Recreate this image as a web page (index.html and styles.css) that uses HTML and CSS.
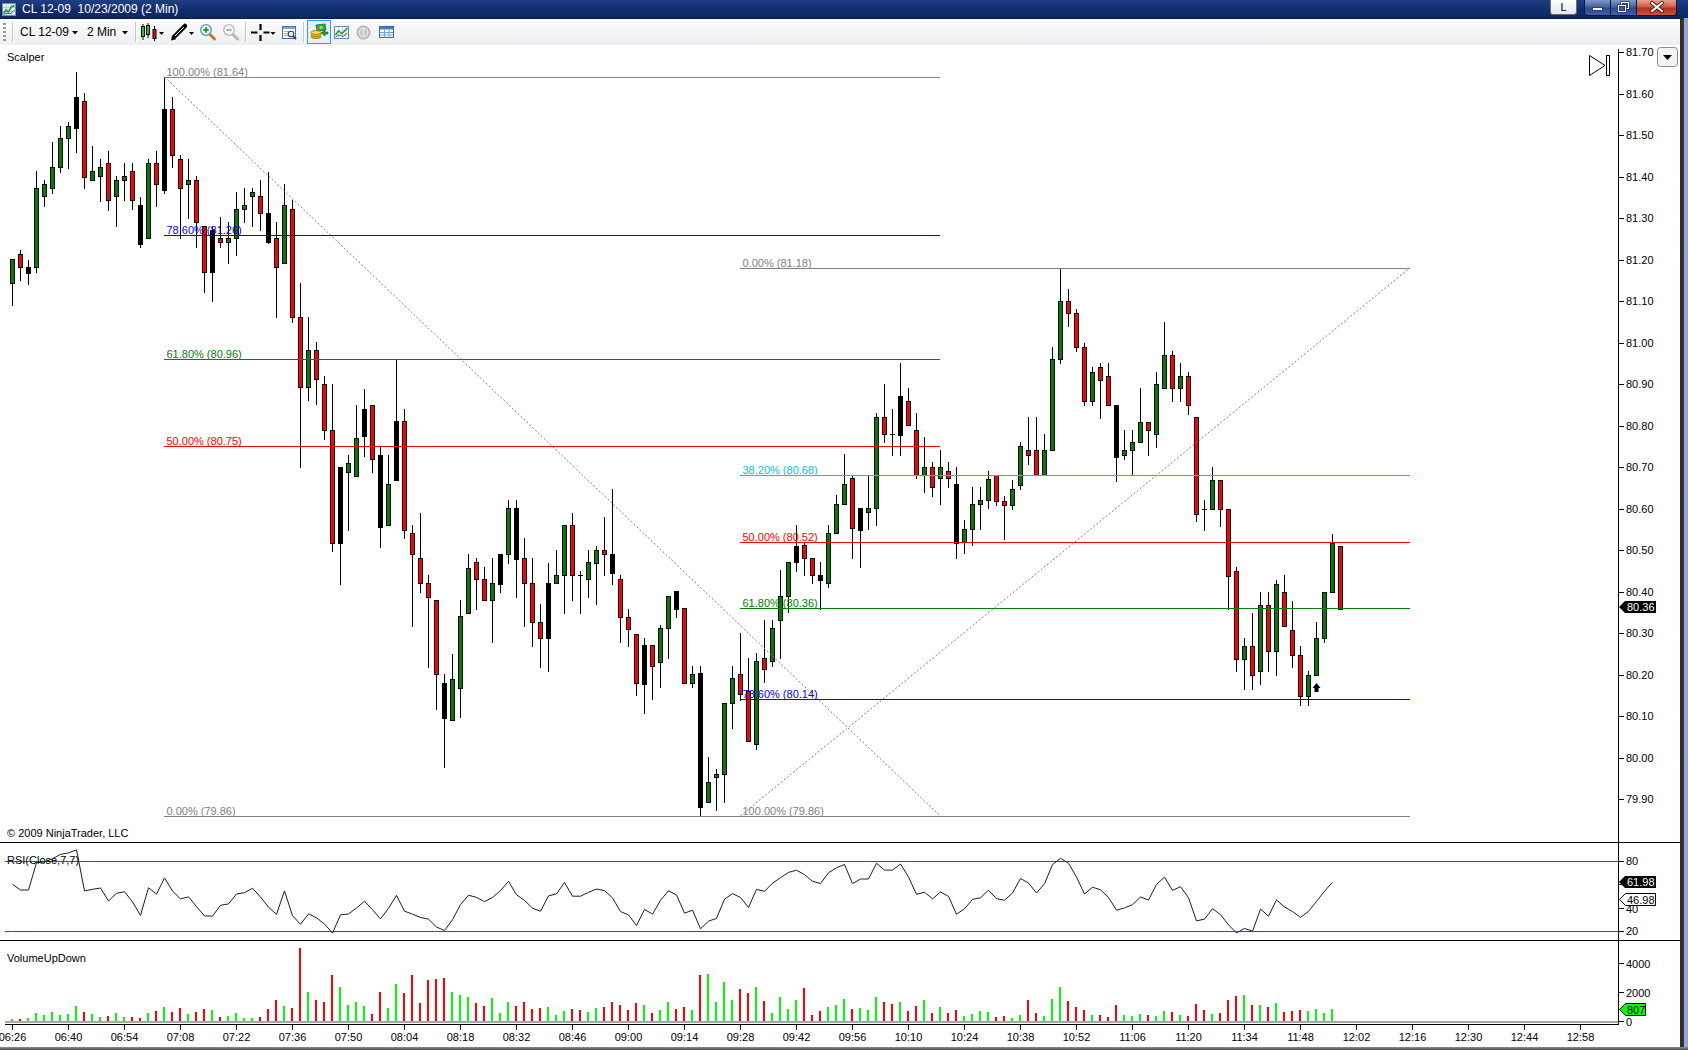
FILE: index.html
```html
<!DOCTYPE html>
<html lang="en">
<head>
<meta charset="utf-8">
<title>CL 12-09 10/23/2009 (2 Min)</title>
<link rel="stylesheet" href="styles.css">
</head>
<body>
<div class="window">
  <div class="titlebar">
    <svg class="app-icon" width="14" height="13" viewBox="0 0 14 13">
      <rect x="0.5" y="0.5" width="13" height="12" fill="#eef3f8" stroke="#6f8fb8"/>
      <path d="M1 4.5h12M1 8.5h12M4.5 1v11M9.5 1v11" stroke="#b9c9dc" stroke-width="1"/>
      <polyline points="1.5,10.5 4,7 6.5,9 9,4 12.5,2.5" fill="none" stroke="#1f9f2a" stroke-width="1.6"/>
      <polyline points="1.5,11.5 5,10 8,11 12.5,7" fill="none" stroke="#2a5fd0" stroke-width="1"/>
    </svg>
    <span class="title">CL 12-09  10/23/2009 (2 Min)</span>
    <div class="spacer"></div>
    <div class="btn-l">L</div>
    <div class="caps">
      <div class="cap cap-min">
        <svg width="25" height="15" viewBox="0 0 25 15"><rect x="7.5" y="7.5" width="10" height="3" fill="#fff" stroke="#1b2a50" stroke-width="0.8"/></svg>
      </div>
      <div class="cap cap-max">
        <svg width="25" height="15" viewBox="0 0 25 15">
          <rect x="10.5" y="2.5" width="7" height="6" fill="none" stroke="#1b2a50" stroke-width="2.2"/>
          <rect x="10.5" y="2.5" width="7" height="6" fill="none" stroke="#fff" stroke-width="1"/>
          <rect x="7.5" y="5.5" width="7" height="6" fill="#3a5a9c" stroke="#1b2a50" stroke-width="2.2"/>
          <rect x="7.5" y="5.5" width="7" height="6" fill="none" stroke="#fff" stroke-width="1"/>
        </svg>
      </div>
      <div class="cap cap-close">
        <svg width="40" height="15" viewBox="0 0 40 15">
          <path d="M15 3l10 8M25 3l-10 8" stroke="#3a0c06" stroke-width="3.6" stroke-linecap="square"/>
          <path d="M15 3l10 8M25 3l-10 8" stroke="#fff" stroke-width="2" stroke-linecap="square"/>
        </svg>
      </div>
    </div>
  </div>
  <div class="frame">
    <div class="content">
      <div class="toolbar">
        <div class="grip ml3"></div>
        <div class="tsep ml6"></div>
        <div class="combo ml6"><span>CL 12-09</span><svg class="caret" width="6" height="4" viewBox="0 0 6 4"><path d="M0 0h6L3 3.5z"/></svg></div>
        <div class="combo ml9"><span>2 Min</span><svg class="caret wide" width="6" height="4" viewBox="0 0 6 4"><path d="M0 0h6L3 3.5z"/></svg></div>
        <div class="tsep ml7"></div>
        <div class="tb w27 ml2">
          <svg width="27" height="20" viewBox="0 0 27 20">
            <path d="M4 2v16M9 1v15M15.5 4v15" stroke="#000" stroke-width="1"/>
            <rect x="2.5" y="4.5" width="3" height="10" fill="#12d012" stroke="#000"/>
            <rect x="7.5" y="3.5" width="3" height="9" fill="#12d012" stroke="#000"/>
            <rect x="14" y="7.5" width="3" height="9" fill="#f01010" stroke="#000"/>
            <path d="M20 10h5l-2.5 3z" fill="#000"/>
          </svg>
        </div>
        <div class="tb w26 ml3">
          <svg width="26" height="20" viewBox="0 0 26 20">
            <path d="M2 18.5l1.2-5 3.8 3.8z" fill="#000"/>
            <path d="M5 15l11-11" stroke="#000" stroke-width="4.5" stroke-linecap="round"/>
            <path d="M6 14l9-9" stroke="#fff" stroke-width="1"/>
            <path d="M20 10h5l-2.5 3z" fill="#000"/>
          </svg>
        </div>
        <div class="tb w18 ml4">
          <svg width="18" height="20" viewBox="0 0 18 20">
            <path d="M11 12.5l4.5 4.5" stroke="#c27a2a" stroke-width="3" stroke-linecap="round"/>
            <circle cx="7" cy="8" r="5.3" fill="#eef6ff" stroke="#5b8fc7" stroke-width="1.3"/>
            <path d="M4.3 8h5.4M7 5.3v5.4" stroke="#27a127" stroke-width="2"/>
          </svg>
        </div>
        <div class="tb w18 ml5">
          <svg width="18" height="20" viewBox="0 0 18 20">
            <path d="M11 12.5l4.5 4.5" stroke="#b5b5b5" stroke-width="3" stroke-linecap="round"/>
            <circle cx="7" cy="8" r="5.3" fill="#f6f6f6" stroke="#b8b8b8" stroke-width="1.3"/>
            <path d="M4.3 8h5.4" stroke="#b0b0b0" stroke-width="2"/>
          </svg>
        </div>
        <div class="tsep ml5"></div>
        <div class="tb w27 ml2">
          <svg width="27" height="20" viewBox="0 0 27 20">
            <path d="M2 10.5h6.5M14.5 10.5h6M11.5 2v6M11.5 13v6" stroke="#000" stroke-width="2.2"/>
            <path d="M21.5 10h5l-2.5 3z" fill="#000"/>
          </svg>
        </div>
        <div class="tb w18 ml5">
          <svg width="18" height="20" viewBox="0 0 18 20">
            <rect x="1.5" y="4.5" width="13" height="12" fill="#fff" stroke="#4a6fa5"/>
            <rect x="2" y="5" width="12" height="2" fill="#79a6de"/>
            <path d="M3 9.5h6M3 11.5h4M3 13.5h5" stroke="#9ab3d3"/>
            <circle cx="10" cy="12" r="2.8" fill="#e8f2ff" stroke="#2f3f5f" stroke-width="1.1"/>
            <path d="M12 14l3 3" stroke="#2f3f5f" stroke-width="1.8"/>
          </svg>
        </div>
        <div class="tsep ml4"></div>
        <div class="tb-sel ml2">
          <svg width="22" height="22" viewBox="0 0 22 22">
            <path d="M8 4l9-1 1 6-9 1z" fill="#3aa83a" stroke="#1f6f1f" stroke-width="0.8"/>
            <circle cx="13" cy="6.5" r="1.6" fill="#9be09b"/>
            <ellipse cx="8" cy="15.5" rx="5" ry="2" fill="#e6b21c" stroke="#9a6d00" stroke-width="0.8"/>
            <ellipse cx="8" cy="13.5" rx="5" ry="2" fill="#f2c630" stroke="#9a6d00" stroke-width="0.8"/>
            <ellipse cx="8" cy="11.5" rx="5" ry="2" fill="#ffd94a" stroke="#9a6d00" stroke-width="0.8"/>
            <path d="M13 12l4-3v2h3v2h-3v2z" fill="#2f9a2f" stroke="#1a5e1a" stroke-width="0.6"/>
          </svg>
        </div>
        <div class="tb w18 ml2">
          <svg width="18" height="20" viewBox="0 0 18 20">
            <rect x="1.5" y="4.5" width="14" height="12" fill="#fff" stroke="#6f88a8"/>
            <path d="M2 8.5h13M2 12.5h13M5.5 5v11M9.5 5v11M12.5 5v11" stroke="#cfd9e6"/>
            <polyline points="2.5,13 5.5,9 9,11.5 14.5,6" fill="none" stroke="#1d9a24" stroke-width="1.5"/>
            <polyline points="2.5,15 6,13 10,14.5 14.5,11" fill="none" stroke="#2a5fd0" stroke-width="1"/>
          </svg>
        </div>
        <div class="tb w18 ml4">
          <svg width="18" height="20" viewBox="0 0 18 20">
            <circle cx="8.5" cy="10.5" r="6.5" fill="#c9c9c9" stroke="#a9a9a9"/>
            <circle cx="8.5" cy="10.5" r="4.3" fill="none" stroke="#e4e4e4" stroke-width="1.2"/>
            <path d="M8.5 7v7" stroke="#e8e8e8" stroke-width="1.2"/>
          </svg>
        </div>
        <div class="tb w18 ml5">
          <svg width="18" height="20" viewBox="0 0 18 20">
            <rect x="1.5" y="4.5" width="14" height="11" fill="#fff" stroke="#3a66a8"/>
            <rect x="2" y="5" width="13" height="2.5" fill="#4b7cc2"/>
            <path d="M2 10.5h13M2 13h13M6.5 7.5v8M11 7.5v8" stroke="#7f9ccc"/>
          </svg>
        </div>
      </div>
      <svg id="chart" class="chart" width="1680" height="1002" viewBox="0 45 1680 1002"></svg>
    </div>
    <div class="frame-right"></div>
  </div>
  <div class="frame-bottom"></div>
</div>
<script src="script.js"></script>
</body>
</html>
```

FILE: styles.css
```css
html, body {
  margin: 0;
  padding: 0;
}
body {
  width: 1688px;
  height: 1050px;
  overflow: hidden;
  background: #2c2825;
  font-family: "Liberation Sans", Arial, sans-serif;
}
.window {
  display: flex;
  flex-direction: column;
  width: 1688px;
  height: 1050px;
}
.titlebar {
  height: 18px;
  flex: none;
  display: flex;
  align-items: flex-start;
  background: linear-gradient(#223f84, #102b6b 60%, #0d2764);
  color: #fff;
}
.app-icon {
  margin: 3px 0 0 2px;
  flex: none;
}
.title {
  margin-left: 6px;
  font-size: 12px;
  line-height: 18px;
  white-space: pre;
}
.spacer {
  flex: 1;
}
.btn-l {
  width: 27px;
  height: 15px;
  box-sizing: border-box;
  margin-right: 7px;
  border: 1px solid #6a6f7a;
  border-top: none;
  border-radius: 0 0 3px 3px;
  background: linear-gradient(#ffffff, #e4e6ea);
  color: #000;
  font-size: 11px;
  line-height: 14px;
  text-align: center;
}
.caps {
  display: flex;
  width: 93px;
  height: 16px;
  box-sizing: border-box;
  margin-right: 11px;
  border: 1px solid #0b1836;
  border-top: none;
  border-radius: 0 0 4px 4px;
  overflow: hidden;
}
.cap {
  height: 15px;
}
.cap svg {
  display: block;
}
.cap-min, .cap-max {
  width: 25px;
  background: linear-gradient(#7f97c8, #46649f 45%, #2c4b8c 55%, #3d62a8);
}
.cap-max {
  border-left: 1px solid #0b1836;
}
.cap-close {
  flex: 1;
  border-left: 1px solid #0b1836;
  background: linear-gradient(#e6a291, #cf5a43 45%, #b5301d 55%, #c9543c);
}
.frame {
  flex: 1;
  display: flex;
  min-height: 0;
}
.content {
  width: 1680px;
  display: flex;
  flex-direction: column;
  background: #fff;
}
.toolbar {
  height: 27px;
  flex: none;
  box-sizing: border-box;
  border-top: 1px solid #0a1c48;
  display: flex;
  align-items: center;
  background: linear-gradient(#fbfbfc, #f3f4f6 60%, #eceef1);
  font-size: 12px;
  color: #000;
}
.ml2 { margin-left: 2px; }
.ml3 { margin-left: 3px; }
.ml4 { margin-left: 4px; }
.ml5 { margin-left: 5px; }
.ml6 { margin-left: 6px; }
.ml7 { margin-left: 7px; }
.ml9 { margin-left: 9px; }
.grip {
  width: 3px;
  height: 18px;
  background: repeating-linear-gradient(#9a9a9a 0, #9a9a9a 2px, transparent 2px, transparent 4px);
}
.tsep {
  width: 1px;
  height: 20px;
  background: #c4c6ca;
  border-right: 1px solid #ffffff;
}
.combo {
  display: flex;
  align-items: center;
  height: 20px;
}
.caret {
  margin-left: 3px;
  margin-top: 1px;
}
.caret.wide {
  margin-left: 6px;
}
.tb {
  height: 20px;
}
.tb svg, .tb-sel svg, .combo svg {
  display: block;
}
.w18 { width: 18px; }
.w26 { width: 26px; }
.w27 { width: 27px; }
.tb-sel {
  width: 24px;
  height: 24px;
  box-sizing: border-box;
  border: 1px solid #3399ff;
  background: #e3f1fc;
}
.chart {
  display: block;
  flex: none;
}
.chart text {
  font-family: "Liberation Sans", Arial, sans-serif;
  font-size: 11px;
}
.frame-right {
  width: 8px;
  flex: none;
  background: linear-gradient(to right, #2f2a27 0, #3a332e 4px, #93abdc 4px, #8aa3d6 8px);
}
.frame-bottom {
  height: 3px;
  flex: none;
  background: linear-gradient(#8e8e8e, #4a4a4a);
}
```

FILE: script.js
```js
(function () {
  var NS = 'http://www.w3.org/2000/svg';
  var svg = document.getElementById('chart');

  function el(tag, attrs, parent) {
    var e = document.createElementNS(NS, tag);
    for (var k in attrs) e.setAttribute(k, attrs[k]);
    (parent || svg).appendChild(e);
    return e;
  }
  function label(x, y, s, fill, anchor) {
    var t = el('text', { x: x, y: y });
    if (fill) t.setAttribute('fill', fill);
    if (anchor) t.setAttribute('text-anchor', anchor);
    t.textContent = s;
    return t;
  }
  function hline(x1, x2, y, color) {
    var yy = Math.round(y) + 0.5;
    return el('line', { x1: x1, x2: x2, y1: yy, y2: yy, stroke: color, 'stroke-width': 1 });
  }
  function vline(x, y1, y2, color) {
    var xx = Math.round(x) + 0.5;
    return el('line', { x1: xx, x2: xx, y1: y1, y2: y2, stroke: color, 'stroke-width': 1 });
  }
  function PY(p) { return 52 + (81.70 - p) * 415; }
  function CX(n) { return 12 + 8 * n; }

  /* OHLC bars, recorded as pixel rows: type, bodyTop, bodyBottom, wickTop, wickBottom */
  var segs = [
    { a: 60, s: 3, d: 'g 598 670 598 735|r 583 622 570 660|k+ 622 640 600 672|g 385 622 333 635|g 373 409 360 437|g 322 385 246 398|g 235 322 198 335|g 198 235 186 323|k+ 112 203 37 277|r 124 350 100 385|g 334 361 258 361|g 322 349 297 422|r 310 421 272 449|g 361 409 348 497|g 349 361 310 421|r 334 421 310 448|k- 435 552 410 562|g 310 535 297 535|r 310 373 272 437|k+ 148 390 50 400|r 148 286 112 322|r 297 385 286 535|g 361 373 297 473|r 361 485 348 560|r 497 635 497 697|k- 510 637 497 722|r 535 547 472 560|g 535 547 485 610|g 448 535 397 585|g 436 448 385 485|g 397 409 385 497|r 409 460 360 510|k- 460 547 335 550|r 535 622 485 772|g 435 610 373 610|r 448 772 420 785|r 772 982 670 1220|g 870 982 770 1020|r 870 958 847 1033' },
    { a: 340.9, s: 3, d: 'r 130 268 105 293|r 268 605 130 630|k+ 378 607 378 730|g 367 392 342 567|g 292 404 192 404|k+ 205 285 143 345|r 193 355 193 392|k- 342 557 318 618|g 430 553 342 553|k+ 240 418 55 418|r 240 566 205 592|r 577 640 553 855|r 652 727 517 752|r 727 767 703 977|r 777 1000 777 1103|k- 1027 1130 1000 1278|g 1015 1138 940 1138|g 825 1040 777 1127|g 680 815 640 815|r 663 715 652 803|r 715 778 678 778|g 727 778 652 903|k+ 640 730 640 753|g 502 640 477 665|k- 502 655 478 768|r 652 727 592 855|r 727 842 652 915|r 842 890 790 977|k+ 727 892 665 990|g 703 727 628 727|g 553 703 553 815|r 553 703 517 778|d 703 703 690 815|g 663 715 628 767|g 628 665 615 790|r 628 640 528 703|k- 640 695 443 728|r 715 827 703 903|r 827 865 803 915|r 878 1027 878 1063|k+ 912 1030 890 1115' },
    { a: 260.66, s: 2.802, d: 'r 1077 1135 1077 1228|g 1030 1125 1020 1195|g 940 1030 940 1112|k- 925 975 925 998|r 972 1182 972 1182|g 1158 1182 1135 1195|k- 1155 1530 1135 1555|g 1460 1518 1390 1518|g 1437 1448 1425 1540|g 1240 1437 1240 1518|g 1170 1240 1135 1310|r 1158 1215 1043 1230|r 1205 1345 1112 1345|g 1123 1355 1100 1367|r 1112 1145 1008 1180|g 1030 1123 1008 1135|g 940 1008 868 1112|g 843 940 843 985|k+ 800 845 740 870|r 798 832 790 880|r 832 880 832 902|k- 880 895 845 975|g 763 902 740 915|g 682 762 658 762|g 625 682 543 682|r 610 750 600 832|k+ 693 755 693 858|g 693 705 600 752|g 438 692 427 740|r 438 485 345 508|d 485 485 415 545|k+ 380 488 288 545|r 393 460 357 460|r 475 600 427 610|g 578 600 495 648|r 578 635 565 660|g 578 610 530 682|r 590 610 565 635|k- 625 790 578 832|g 752 788 728 820|g 682 752 635 798|g 670 682 635 752|g 612 670 590 692' },
    { a: 260.44, s: 2.99, d: 'r 643 718 643 730|r 718 730 705 832|g 682 730 655 742|g 556 670 543 682|r 568 582 468 608|r 568 643 468 643|g 568 643 520 643|g 295 568 258 568|g 122 295 22 308|r 122 157 85 197|r 157 258 145 272|r 258 420 247 433|g 333 420 320 433|r 320 358 307 470|r 345 433 307 433|k- 433 587 433 658|g 568 582 507 595|g 543 568 507 643|g 482 543 380 543|r 482 507 482 583|g 370 520 333 557|g 283 382 183 382|r 283 382 270 420|g 345 382 307 420|r 345 433 333 458|r 468 757 468 780|d 742 742 717 805|g 655 742 618 742|r 655 742 655 793|r 742 943 742 1043|r 930 1192 918 1228|g 1153 1192 1128 1280|r 1153 1240 1053 1280|g 1030 1228 990 1267|r 1030 1168 990 1228|g 967 1168 955 1240|r 992 1093 942 1093|r 1105 1180 1018 1217|r 1180 1303 1153 1330|g 1240 1303 1228 1330|g 1128 1240 1080 1240|g 992 1128 992 1140|g 845 992 818 992|r 855 1043 855 1043' }
  ];
  var bars = [];
  segs.forEach(function (sg) {
    sg.d.split('|').forEach(function (r) {
      var p = r.trim().split(/\s+/);
      var f = function (v) { return sg.a + (+v) / sg.s; };
      var b = { t: p[0], bt: f(p[1]), bb: f(p[2]), wt: f(p[3]), wb: f(p[4]) };
      b.close = (b.t === 'r' || b.t === 'k-') ? b.bb : b.bt;
      bars.push(b);
    });
  });

  var vols = [2,2,3,8,6,9,6,7,15,9, 7,4,5,8,4,4,3,8,10,14, 9,13,7,9,12,11,4,5,8,3, 3,4,12,21,15,13,73,29,21,19,
    46,34,16,19,15,7,29,13,37,28, 46,18,41,42,43,29,26,24,18,15, 23,8,19,15,19,12,13,14,6,10, 12,11,9,13,14,19,16,11,18,16,
    8,11,19,12,14,11,46,47,19,39, 21,32,28,34,20,8,24,12,21,33, 6,10,14,16,22,12,13,11,24,19, 17,19,10,15,21,8,14,8,11,5,
    7,10,9,4,5,3,6,21,8,5, 22,34,20,14,11,6,6,4,16,6, 5,7,6,5,10,9,6,5,17,11, 7,8,21,25,26,16,16,14,18,9, 10,11,10,12,8,12];
  var vcol = 'grgggggggr' + 'ggrggrrgrg' + 'rrgrrgrggg' + 'grrrgrrgrr' + 'rggggrrggr' + 'rrrrrgggrr' + 'gggrrrrggg' + 'rrggrrrrrg' +
    'rggrrgrggg' + 'grrgrggggr' + 'rrgggrgggr' + 'rgrrgrgrrg' + 'gggrrggrrg' + 'ggrrrgrrrg' + 'ggrggrgrrr' + 'grrrgrgrgr' + 'rrgggg';

  var AX = 1618;

  /* panel frames */
  hline(0, 1680, 842, '#000');
  hline(0, 1680, 940, '#000');
  hline(5, AX, 861, '#ff0000');
  hline(5, AX, 931, '#ff0000');
  el('rect', { x: 5, y: 1021, width: AX - 5, height: 2, fill: '#a8a8a8' });

  /* candles */
  var gC = el('g', {});
  var COL = { g: '#008000', r: '#ff0000', 'k+': '#000', 'k-': '#000', d: '#000' };
  bars.forEach(function (b, i) {
    var x = CX(i);
    var wt = Math.round(b.wt), wb = Math.round(b.wb), bt = Math.round(b.bt), bb = Math.round(b.bb);
    el('line', { x1: x + 0.5, x2: x + 0.5, y1: wt, y2: wb + 1, stroke: '#000', 'stroke-width': 1 }, gC);
    if (b.t === 'd') {
      el('line', { x1: x - 2, x2: x + 3, y1: bt + 0.5, y2: bt + 0.5, stroke: '#000', 'stroke-width': 1 }, gC);
    } else {
      el('rect', { x: x - 1.5, y: bt + 0.5, width: 4, height: Math.max(bb - bt, 1), fill: COL[b.t], stroke: '#000', 'stroke-width': 1 }, gC);
    }
  });

  /* fibonacci retracements */
  function fib(x1, x2, levels) {
    levels.forEach(function (l) {
      var y = PY(l.p);
      hline(x1, x2, y, l.c);
      label(x1 + 2.5, Math.round(y) - 1, l.t, l.c);
    });
  }
  el('line', { x1: 164.5, y1: PY(81.64), x2: 940, y2: PY(79.86), stroke: '#808080', 'stroke-width': 1, 'stroke-dasharray': '2 2' });
  el('line', { x1: 740.5, y1: PY(79.86), x2: 1410, y2: PY(81.18), stroke: '#808080', 'stroke-width': 1, 'stroke-dasharray': '2 2' });
  fib(164, 940, [
    { p: 81.64, c: '#808080', t: '100.00% (81.64)' },
    { p: 81.26, c: '#0000ff', t: '78.60% (81.26)' },
    { p: 80.96, c: '#008000', t: '61.80% (80.96)' },
    { p: 80.75, c: '#ff0000', t: '50.00% (80.75)' },
    { p: 79.86, c: '#808080', t: '0.00% (79.86)' }
  ]);
  fib(740, 1410, [
    { p: 81.18, c: '#808080', t: '0.00% (81.18)' },
    { p: 80.68, c: '#00bfff', t: '38.20% (80.68)' },
    { p: 80.52, c: '#ff0000', t: '50.00% (80.52)' },
    { p: 80.36, c: '#008000', t: '61.80% (80.36)' },
    { p: 80.14, c: '#0000ff', t: '78.60% (80.14)' },
    { p: 79.86, c: '#808080', t: '100.00% (79.86)' }
  ]);

  /* scalper signal arrow */
  el('path', { d: 'M1316.5 683 L1320.5 688 L1318.5 688 L1318.5 692 L1314.5 692 L1314.5 688 L1312.5 688 Z', fill: '#000' });

  /* RSI(7) on closes of completed bars */
  var au = 9, ad = 6, rsi = [];
  for (var i = 0; i < vols.length; i++) {
    if (i > 0) {
      var ch = bars[i - 1].close - bars[i].close;
      au = (au * 6 + Math.max(ch, 0)) / 7;
      ad = (ad * 6 + Math.max(-ch, 0)) / 7;
    }
    rsi.push(ad === 0 ? 100 : 100 - 100 / (1 + au / ad));
  }
  var pts = rsi.map(function (v, n) {
    return (CX(n) + 0.5) + ',' + (861 + (80 - v) * 70 / 60).toFixed(1);
  }).join(' ');
  el('polyline', { points: pts, fill: 'none', stroke: '#1e1e1e', 'stroke-width': 1 });

  /* volume */
  vols.forEach(function (h, n) {
    el('rect', { x: CX(n) - 1, y: 1021 - h, width: 2, height: h, fill: vcol[n] === 'g' ? '#00ff00' : '#ff0000' });
  });

  /* axes */
  vline(AX, 49, 1025, '#000');
  hline(5, AX, 1024, '#000');
  for (var k = 0; k <= 18; k++) {
    var y = 52 + k * 41.5;
    hline(AX, AX + 6, y, '#000');
    label(1626, Math.round(y) + 4, (81.70 - k * 0.10).toFixed(2));
  }
  /* RSI scale: the 60 label sits fully under the value marker, so only its tick shows */
  hline(AX, AX + 6, 884, '#000');
  [[80, 861, 865], [40, 908, 913], [20, 931, 935]].forEach(function (r) {
    hline(AX, AX + 6, r[1], '#000');
    label(1626, r[2], String(r[0]));
  });
  [[4000, 963], [2000, 992], [0, 1021]].forEach(function (r) {
    hline(AX, AX + 6, r[1], '#000');
    label(1626, r[1] + 5, String(r[0]));
  });
  for (var t = 0; t <= 28; t++) {
    var x = CX(7 * t) + 0.5;
    el('line', { x1: x, x2: x, y1: 1024, y2: 1030, stroke: '#000', 'stroke-width': 1 });
    var m = 386 + 14 * t;
    var hh = Math.floor(m / 60), mm = m % 60;
    label(x, 1041, (hh < 10 ? '0' : '') + hh + ':' + (mm < 10 ? '0' : '') + mm, null, 'middle');
  }

  /* value markers */
  el('path', { d: 'M1619 607 L1625 601 H1656 V613 H1625 Z', fill: '#000' });
  label(1627, 611, '80.36', '#fff');
  el('path', { d: 'M1619 882 L1625 876 H1656 V888 H1625 Z', fill: '#000' });
  label(1627, 886, '61.98', '#fff');
  el('path', { d: 'M1619.5 899.5 L1625.5 893.5 H1655.5 V905.5 H1625.5 Z', fill: '#fff', stroke: '#000', 'stroke-width': 1 });
  label(1627, 904, '46.98');
  el('path', { d: 'M1619.5 1009.5 L1625.5 1003.5 H1645.5 V1015.5 H1625.5 Z', fill: '#00ff00', stroke: '#000', 'stroke-width': 1 });
  label(1627, 1014, '807');

  /* panel labels */
  label(7, 61, 'Scalper');
  label(7, 837, '\u00a9 2009 NinjaTrader, LLC');
  label(7, 864, 'RSI(Close,7,7)');
  label(7, 962, 'VolumeUpDown');

  /* scroll-to-end and panel menu buttons */
  el('polygon', { points: '1589.5,55.5 1605,65.5 1589.5,75.5', fill: 'none', stroke: '#000', 'stroke-width': 1 });
  el('rect', { x: 1606.5, y: 55.5, width: 3, height: 20, fill: 'none', stroke: '#000', 'stroke-width': 1 });
  el('rect', { x: 1657.5, y: 47.5, width: 20, height: 19, rx: 3, fill: '#f3f3f3', stroke: '#8a8a8a', 'stroke-width': 1 });
  el('path', { d: 'M1663 55 H1672 L1667.5 60 Z', fill: '#000' });
})();
```
